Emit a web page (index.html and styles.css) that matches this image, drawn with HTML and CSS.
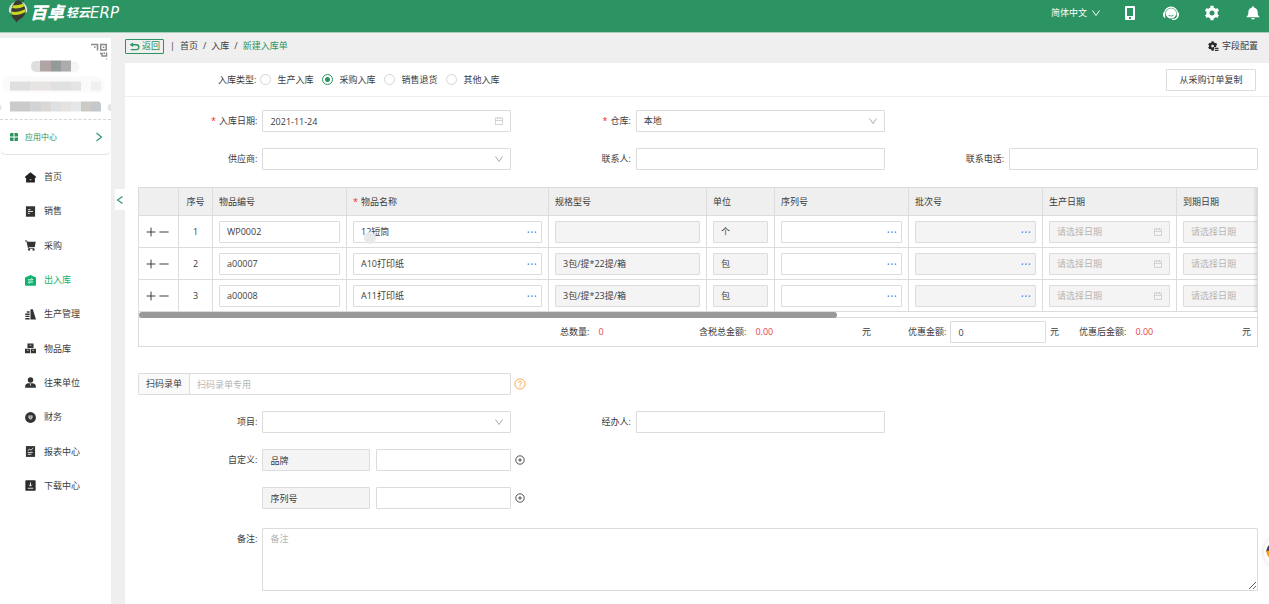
FILE: index.html
```html
<!DOCTYPE html>
<html lang="zh-CN">
<head>
<meta charset="utf-8">
<title>新建入库单</title>
<link rel="stylesheet" href="styles.css">
</head>
<body>
<svg class="defs" aria-hidden="true">
  <symbol id="i-cal" viewBox="0 0 10 10"><path d="M1.500 2h7v6.500h-7zM1.500 4.500h7M3.500 1v2M6.500 1v2" fill="none" stroke="currentColor" stroke-width=".8"/></symbol>
  <symbol id="i-down" viewBox="0 0 10 10"><path d="M1.500 2.500 5 7.500l3.500-5" fill="none" stroke="currentColor" stroke-width="1"/></symbol>
  <symbol id="i-plus" viewBox="0 0 10 10"><path d="M5 .6v8.800M.6 5h8.800" fill="none" stroke="currentColor" stroke-width="1"/></symbol>
  <symbol id="i-minus" viewBox="0 0 10 10"><path d="M.4 5h9.200" fill="none" stroke="currentColor" stroke-width="1"/></symbol>
  <symbol id="i-dots" viewBox="0 0 10 10"><path d="M.7 4.500h1.500v1.200H.7zM4.200 4.500h1.500v1.200H4.200zM7.700 4.500h1.500v1.200H7.700z" fill="currentColor"/></symbol>
  <symbol id="i-add" viewBox="0 0 10 10"><circle cx="5" cy="5" r="4.200" fill="none" stroke="currentColor" stroke-width=".9"/><path d="M5 3.200v3.600M3.200 5h3.600" stroke="currentColor" stroke-width=".9"/></symbol>
</svg>

<header class="topbar">
  <a class="logo" href="#">
    <svg class="bee" viewBox="0 0 20 23" aria-hidden="true">
      <path d="M9 1C4 2 0 7 1 12l3 2L10 5z" fill="#d8e0dc"/>
      <path d="M11 1c5 1 9 5 8 11l-2 1-7-8z" fill="#e9eeeb"/>
      <path d="M7 1.500C9-.3 13-.1 14.500 3 18 8 19 13 15 17c-2 2-5 2.500-6.500 5.500C7 19 3 18 3 13 3 8 5 4 7 1.500z" fill="#3a3a33"/>
      <path d="M5.500 5c3 .5 6 0 9.500-1.500l1.300 2.800C12 8.500 8 9 4 8z" fill="#c9d91f"/>
      <path d="M3.200 11.500c5 1 9 0 14-2.500l.1 3C13 14.500 8 15.500 3.300 14.500z" fill="#c9d91f"/>
      <path d="M10 0l3-.5M13 1l3-.2" stroke="#3a3a33"/>
    </svg>
    <span class="brand">百卓</span><span class="sub">轻云</span><span class="erp">ERP</span>
  </a>
  <nav class="tools" aria-label="工具">
    <button class="lang" type="button">简体中文 <svg class="ico10" aria-hidden="true"><use href="#i-down"/></svg></button>
    <button type="button" aria-label="手机"><svg viewBox="0 0 16 16"><path fill-rule="evenodd" d="M4 1h8q1 0 1 1v12q0 1-1 1H4q-1 0-1-1V2q0-1 1-1zm1 2v8h6V3zm2 9v2h2v-2z" fill="#fff"/></svg></button>
    <button type="button" aria-label="客服"><svg viewBox="0 0 16 16"><path d="M1.600 8.500a6.400 6.400 0 0 1 12.800 0" fill="none" stroke="#fff" stroke-width="1.200"/><path d="M.2 7.500h2V13H1.500Q0 12 0 10zM15.800 7.500h-2V13h.7Q16 12 16 10z" fill="#fff"/><circle cx="8" cy="8.400" r="5.200" fill="#fff"/><path d="M5.500 10.300q2.500 1.600 5 0" fill="none" stroke="#2c9362" stroke-width=".8"/><path d="M14.500 12q-1 2.500-5.500 2.500" fill="none" stroke="#fff" stroke-width="1.200"/></svg></button>
    <button type="button" aria-label="设置"><svg viewBox="0 0 16 16"><circle cx="8" cy="8" r="4.100" fill="none" stroke="#fff" stroke-width="3.200"/><path d="M8 .8v3M8 12.200v3M1.800 4.400l2.600 1.500M11.600 10.100l2.600 1.500M1.800 11.600l2.600-1.500M11.600 5.900l2.600-1.500" stroke="#fff" stroke-width="3.200"/></svg></button>
    <button type="button" aria-label="通知"><svg viewBox="0 0 16 16"><path d="M8 1.200q1 0 1 1.200c2.600.6 3.700 2.500 3.700 5 0 2.300.5 3 1.800 4.300v.6h-13v-.6C2.800 10.400 3.300 9.700 3.300 7.400c0-2.500 1.100-4.400 3.700-5q0-1.200 1-1.200zM6.200 13h3.600q-.3 1.600-1.800 1.600T6.200 13z" fill="#fff"/></svg></button>
  </nav>
</header>

<div class="shell">
  <aside class="side">
    <section class="card">
      <svg class="profile" viewBox="0 0 111 80" aria-hidden="true">
        <g fill="none" stroke="#8b8b8b" stroke-width="1.500"><path d="M91 6h6.500v6M100.700 6h5.500v5.500h-5.500zM100 15h2v2.500h4.500V14"/></g>
        <path d="M94 8h1.500v1.500H94zM102.800 8h1.500v1.500h-1.500zM103.500 14h1.500v1.500h-1.500zM106 20h1v1h-1z" fill="#8b8b8b"/>
        <rect x="31" y="23" width="48" height="11" rx="5" fill="#f5f5f6"/><path d="M36 22.500h4v11h-4q-5-1-5-6t5-5z" fill="#dedede"/>
        <path d="M40 22h11v11H40z" fill="#b0a4a5"/><path d="M51 22h10v11H51z" fill="#949999"/><path d="M61 22h10v11H61z" fill="#adabad"/>
        <rect x="2" y="38" width="103" height="16" rx="8" fill="#fafafa"/>
        <path d="M10 43h20v9H10z" fill="#dfdfdf"/><path d="M30 43h21v9H30z" fill="#e7e4e3"/><path d="M51 43h20v9H51z" fill="#dfe0e2"/><path d="M71 43h10v9H71z" fill="#e4e4e4"/><path d="M91 43h10v9H91z" fill="#f0f0f0"/>
        <circle cx="-2" cy="69" r="3.500" fill="#e4e4e4"/><circle cx="111" cy="69" r="3.500" fill="#e4e4e4"/>
        <path d="M10 63h20v10H10z" fill="#cbcaca"/><path d="M30 63h11v10H30z" fill="#d2d3d6"/><path d="M41 63h10v10H41z" fill="#d9d8d4"/><path d="M51 63h10v10H51z" fill="#dfe0e3"/><path d="M61 63h10v10H61z" fill="#e5e2df"/><path d="M71 63h10v10H71z" fill="#e5e8ea"/><path d="M81 63h10v10H81z" fill="#cdcac4"/><path d="M91 63h8l2 2v8H91z" fill="#c4c8ca"/>
      </svg>
      <a class="apps" href="#">
        <svg class="ico10" viewBox="0 0 10 10" aria-hidden="true"><path d="M2 1h2.500v3.500h-3.500V2q0-1 1-1zM5.500 1H8q1 0 1 1v2.500H5.500zM1 5.500h3.500V9H2q-1 0-1-1zM5.500 5.500H9V8q0 1-1 1H5.500z" fill="#2c9362"/></svg>
        <span>应用中心</span>
        <svg class="ico10" viewBox="0 0 10 10" aria-hidden="true"><path d="M2.500 1 7.500 5l-5 4" fill="none" stroke="#2c9362" stroke-width="1.100"/></svg>
      </a>
    </section>
    <nav class="menu" aria-label="主菜单">
      <a href="#"><svg viewBox="0 0 12 12"><path d="M6 .3 11.800 5v1.500h-1V11.500H1.200v-5h-1V5z" fill="#222"/><path d="M5 8.500h2" stroke="#ddd"/></svg>首页</a>
      <a href="#"><svg viewBox="0 0 12 12"><path d="M1 .3h10v11.400H1z" fill="#333"/><path d="M3.200 4h3M3.200 6h5.500M3.200 8h2" stroke="#fff" stroke-width=".9"/></svg>销售</a>
      <a href="#"><svg viewBox="0 0 12 12"><path d="M2 2h9.700l-1 5.500H3.600z" fill="#333"/><path d="M0 1h2l1.800 8H10" fill="none" stroke="#333"/><circle cx="4.500" cy="10.500" r="1.200" fill="#333"/><circle cx="9.300" cy="10.500" r="1.200" fill="#333"/></svg>采购</a>
      <a href="#" class="on" aria-current="page"><svg viewBox="0 0 12 12"><path d="M6 0l6 2.600V10.500q0 1.300-1.300 1.300H1.300Q0 11.800 0 10.500V2.600z" fill="#0fb46f"/><path d="M3.300 5.300h5M7 3.700l1.600 1.600M8.700 7.700h-5M5 9.300 3.400 7.700" fill="none" stroke="#fff" stroke-width="1"/></svg>出入库</a>
      <a href="#"><svg viewBox="0 0 12 12"><path d="M6 .3h2.500L12 11.500H6zM.3 5h4.700v1.500H.3zM.3 7.300H5v1.500H.3zM.3 9.700H5v1.800H.3zM2 2.500h3v1.700H2z" fill="#333"/></svg>生产管理</a>
      <a href="#"><svg viewBox="0 0 12 12"><path d="M2.700.6h6.600v4.800H2.700zM0 6.200h5.600v5H0zM6.400 6.200H12v5H6.400z" fill="#333"/><path d="M5 2.500h2M2 8h2M8 8h2" stroke="#fff" stroke-width=".7"/></svg>物品库</a>
      <a href="#"><svg viewBox="0 0 12 12"><circle cx="6" cy="3.200" r="3" fill="#333"/><path d="M.2 11.800V9.800Q.5 7.100 4 6.800h4q3.500.3 3.800 3v2z" fill="#333"/><path d="M6 7v2.500" stroke="#fff" stroke-width=".8"/></svg>往来单位</a>
      <a href="#"><svg viewBox="0 0 12 12"><circle cx="6" cy="6" r="5.900" fill="#333"/><path d="M3.800 3.800h4.400v2.500L6 8.800 3.800 6.300z" fill="#ddd"/><path d="M4.500 5.300h3M6 5v3" stroke="#555" stroke-width=".6"/></svg>财务</a>
      <a href="#"><svg viewBox="0 0 12 12"><path d="M1 .1h10v11.800H1z" fill="#333"/><path d="M3 5l2-1.500L6.500 4.500 9 2.200M3 7h5.500M3 9h4" fill="none" stroke="#fff" stroke-width=".9"/></svg>报表中心</a>
      <a href="#"><svg viewBox="0 0 12 12"><rect x=".4" y=".2" width="11.200" height="11.600" rx="1" fill="#2b2b2b"/><path d="M6 2.500v4M4.300 5 6 6.800 7.700 5M3 9h6" fill="none" stroke="#fff" stroke-width=".9"/></svg>下载中心</a>
    </nav>
  </aside>

  <div class="gutter"><button class="fold" type="button" aria-label="收起菜单"><svg class="ico10" viewBox="0 0 10 10"><path d="M7.500 1.500 2.500 5l5 3.500" fill="none" stroke="#2c9362" stroke-width="1.100"/></svg></button></div>

  <main class="main">
    <div class="crumbs">
      <button class="back" type="button"><svg viewBox="0 0 12 10" aria-hidden="true"><path d="M4.500.5v5L.5 3z" fill="#2c9362"/><path d="M3 3h5q2.800 0 2.800 2.800T8 8.500H2" fill="none" stroke="#2c9362" stroke-width="1.500"/></svg>返回</button>
      <span class="bar">|</span>
      <a href="#">首页</a><span>/</span><a href="#">入库</a><span>/</span><a href="#" class="here">新建入库单</a>
      <button class="config" type="button"><svg viewBox="0 0 12 12" aria-hidden="true"><circle cx="5" cy="5.500" r="2.800" fill="none" stroke="#2b2b2b" stroke-width="2.600"/><path d="M5 .3v2M5 8.700v2M.8 3l1.800 1M7.400 4l2-1M.8 8l1.800-1" stroke="#2b2b2b" stroke-width="2.400"/><path d="M6.700 6.700h5v5h-5z" fill="#efefef"/><path d="M7.500 8h4M7.500 10.200h4" stroke="#333" stroke-width="1.300"/></svg>字段配置</button>
    </div>

    <form class="form">
      <div class="type-row">
        <fieldset class="types">
          <legend>入库类型:</legend>
          <label><input type="radio" name="type">生产入库</label>
          <label><input type="radio" name="type" checked>采购入库</label>
          <label><input type="radio" name="type">销售退货</label>
          <label><input type="radio" name="type">其他入库</label>
        </fieldset>
        <button class="copy" type="button">从采购订单复制</button>
      </div>

      <div class="body">
        <div class="grid">
          <div class="item"><label class="req" for="date">入库日期:</label><div class="box"><input id="date" type="text" value="2021-11-24"><svg class="ico10"><use href="#i-cal"/></svg></div></div>
          <div class="item"><label class="req" for="store">仓库:</label><div class="box"><select id="store"><option>本地</option></select><svg class="ico10 arrow"><use href="#i-down"/></svg></div></div>
          <div class="item first"><label for="supplier">供应商:</label><div class="box"><select id="supplier"><option></option></select><svg class="ico10 arrow"><use href="#i-down"/></svg></div></div>
          <div class="item"><label for="contact">联系人:</label><div class="box"><input id="contact" type="text"></div></div>
          <div class="item"><label for="phone">联系电话:</label><div class="box"><input id="phone" type="text"></div></div>
        </div>

        <section class="goods">
          <div class="scroller">
            <table>
              <colgroup><col class="w-op"><col class="w-no"><col class="w-m"><col class="w-name"><col class="w-spec"><col class="w-unit"><col class="w-m"><col class="w-m"><col class="w-m"><col class="w-m"></colgroup>
              <thead><tr><th></th><th class="mid">序号</th><th>物品编号</th><th><span class="req">物品名称</span></th><th>规格型号</th><th>单位</th><th>序列号</th><th>批次号</th><th>生产日期</th><th>到期日期</th></tr></thead>
              <tbody>
                <tr>
                  <td class="ops"><button type="button" aria-label="添加行"><svg class="ico10"><use href="#i-plus"/></svg></button><button type="button" aria-label="删除行"><svg class="ico10"><use href="#i-minus"/></svg></button></td>
                  <td class="mid">1</td>
                  <td><div class="box"><input type="text" aria-label="物品编号" value="WP0002"></div></td>
                  <td><div class="box"><input type="text" aria-label="物品名称" value="12短筒"><span class="smudge"></span><svg class="ico10 more"><use href="#i-dots"/></svg></div></td>
                  <td><div class="box off"><input type="text" aria-label="规格型号" disabled></div></td>
                  <td><div class="box off"><input type="text" aria-label="单位" value="个" disabled></div></td>
                  <td><div class="box"><input type="text" aria-label="序列号"><svg class="ico10 more"><use href="#i-dots"/></svg></div></td>
                  <td><div class="box off"><input type="text" aria-label="批次号" disabled><svg class="ico10 more"><use href="#i-dots"/></svg></div></td>
                  <td><div class="box off"><input type="text" aria-label="生产日期" placeholder="请选择日期" disabled><svg class="ico10"><use href="#i-cal"/></svg></div></td>
                  <td><div class="box off"><input type="text" aria-label="到期日期" placeholder="请选择日期" disabled><svg class="ico10"><use href="#i-cal"/></svg></div></td>
                </tr>
                <tr>
                  <td class="ops"><button type="button" aria-label="添加行"><svg class="ico10"><use href="#i-plus"/></svg></button><button type="button" aria-label="删除行"><svg class="ico10"><use href="#i-minus"/></svg></button></td>
                  <td class="mid">2</td>
                  <td><div class="box"><input type="text" aria-label="物品编号" value="a00007"></div></td>
                  <td><div class="box"><input type="text" aria-label="物品名称" value="A10打印纸"><svg class="ico10 more"><use href="#i-dots"/></svg></div></td>
                  <td><div class="box off"><input type="text" aria-label="规格型号" value="3包/提*22提/箱" disabled></div></td>
                  <td><div class="box off"><input type="text" aria-label="单位" value="包" disabled></div></td>
                  <td><div class="box"><input type="text" aria-label="序列号"><svg class="ico10 more"><use href="#i-dots"/></svg></div></td>
                  <td><div class="box off"><input type="text" aria-label="批次号" disabled><svg class="ico10 more"><use href="#i-dots"/></svg></div></td>
                  <td><div class="box off"><input type="text" aria-label="生产日期" placeholder="请选择日期" disabled><svg class="ico10"><use href="#i-cal"/></svg></div></td>
                  <td><div class="box off"><input type="text" aria-label="到期日期" placeholder="请选择日期" disabled><svg class="ico10"><use href="#i-cal"/></svg></div></td>
                </tr>
                <tr>
                  <td class="ops"><button type="button" aria-label="添加行"><svg class="ico10"><use href="#i-plus"/></svg></button><button type="button" aria-label="删除行"><svg class="ico10"><use href="#i-minus"/></svg></button></td>
                  <td class="mid">3</td>
                  <td><div class="box"><input type="text" aria-label="物品编号" value="a00008"></div></td>
                  <td><div class="box"><input type="text" aria-label="物品名称" value="A11打印纸"><svg class="ico10 more"><use href="#i-dots"/></svg></div></td>
                  <td><div class="box off"><input type="text" aria-label="规格型号" value="3包/提*23提/箱" disabled></div></td>
                  <td><div class="box off"><input type="text" aria-label="单位" value="包" disabled></div></td>
                  <td><div class="box"><input type="text" aria-label="序列号"><svg class="ico10 more"><use href="#i-dots"/></svg></div></td>
                  <td><div class="box off"><input type="text" aria-label="批次号" disabled><svg class="ico10 more"><use href="#i-dots"/></svg></div></td>
                  <td><div class="box off"><input type="text" aria-label="生产日期" placeholder="请选择日期" disabled><svg class="ico10"><use href="#i-cal"/></svg></div></td>
                  <td><div class="box off"><input type="text" aria-label="到期日期" placeholder="请选择日期" disabled><svg class="ico10"><use href="#i-cal"/></svg></div></td>
                </tr>
              </tbody>
            </table>
          </div>
          <div class="track"><div class="thumb"></div></div>
          <div class="totals">
            <div class="sum qty"><span>总数量:</span><b>0</b></div>
            <div class="sum tax"><span>含税总金额:</span><b>0.00</b><span>元</span></div>
            <div class="sum cut"><label for="cut">优惠金额:</label><div class="box"><input id="cut" type="text" value="0"></div><span>元</span></div>
            <div class="sum net"><span>优惠后金额:</span><b>0.00</b><span>元</span></div>
          </div>
        </section>

        <div class="grid lower">
          <div class="scan first"><label for="scan">扫码录单</label><input id="scan" type="text" placeholder="扫码录单专用"><button class="tail help" type="button" aria-label="帮助"><svg viewBox="0 0 12 12"><circle cx="6" cy="6" r="5.100" fill="none" stroke="#f9a94f"/><path d="M4.300 4.800Q4.300 3.300 6 3.300t1.700 1.300Q7.700 5.600 6 6.200V7.200M6 8v1" fill="none" stroke="#f9a94f" stroke-width=".9"/></svg></button></div>
          <div class="item first"><label for="project">项目:</label><div class="box"><select id="project"><option></option></select><svg class="ico10 arrow"><use href="#i-down"/></svg></div></div>
          <div class="item"><label for="agent">经办人:</label><div class="box"><input id="agent" type="text"></div></div>
          <div class="item first"><label for="c1">自定义:</label><div class="pair"><div class="box off"><input id="c1" type="text" value="品牌" disabled></div><div class="box"><input type="text" aria-label="品牌"></div><button class="tail" type="button" aria-label="添加自定义"><svg class="ico10"><use href="#i-add"/></svg></button></div></div>
          <div class="item first"><span></span><div class="pair"><div class="box off"><input type="text" aria-label="自定义名称" value="序列号" disabled></div><div class="box"><input type="text" aria-label="序列号"></div><button class="tail" type="button" aria-label="添加自定义"><svg class="ico10"><use href="#i-add"/></svg></button></div></div>
        </div>
        <div class="remark"><label for="remark">备注:</label><textarea id="remark" placeholder="备注"></textarea></div>
      </div>
    </form>
  </main>
</div>
<button class="float" type="button" aria-label="在线客服"><svg viewBox="0 0 28 24"><path d="M0 12Q1 6 5 3l20-3v14z" fill="#3d4257"/><path d="M0 11l9-1 4 13Q1 20 0 11z" fill="#fa9d1c"/></svg></button>
</body>
</html>
```

FILE: styles.css
```css
* { box-sizing: border-box; }

body {
  margin: 0;
  min-height: 100vh;
  display: flex;
  flex-direction: column;
  overflow: hidden;
  background: #efefef;
  color: #3c3c3c;
  font: 9px/14px "Open Sans", "Noto Sans CJK SC", sans-serif;
}

a { color: inherit; text-decoration: none; }
button, input, select, textarea { font: inherit; color: inherit; margin: 0; }
button { padding: 0; border: 0; background: none; cursor: pointer; }
svg { display: block; flex: none; }
.defs { position: absolute; width: 0; height: 0; }
.ico10 { width: 10px; height: 10px; }

.topbar {
  display: flex;
  justify-content: space-between;
  height: 33px;
  padding: 0 8px;
  background: #2c9362;
  border-bottom: 1px solid #a9cfbb;
  color: #fff;
}
.logo { display: flex; align-items: center; height: 25px; font-style: italic; font-weight: 700; }
.bee { width: 20px; height: 23px; align-self: flex-start; margin-right: 2px; }
.brand { font-size: 17px; font-weight: 900; line-height: 24px; }
.sub { font-size: 12px; margin-left: 2px; }
.erp { font-size: 15px; font-weight: 400; font-family: "DejaVu Sans", sans-serif; }
.tools { display: flex; align-items: center; gap: 25px; height: 26px; }
.tools svg { width: 16px; height: 16px; }
.lang { display: flex; align-items: center; gap: 4px; margin-right: -4px; }
.tools .ico10 { width: 10px; height: 10px; }

.shell { flex: 1; display: flex; min-height: 0; }

.side { width: 111px; margin-top: 5px; background: #fff; display: flex; flex-direction: column; }
.card { border-bottom: 1px solid #e2e2e2; border-radius: 0 0 6px 6px; }
.profile { width: 111px; height: 81px; overflow: hidden; }
.apps {
  display: flex;
  align-items: center;
  height: 35px;
  padding: 0 7px 0 9px;
  gap: 6px;
  border-top: 1px dashed #d5d5d5;
  color: #2c9362;
}
.apps span { flex: 1; font-size: 8px; }
.menu { flex: 1; display: flex; flex-direction: column; padding: 5px 0 101px; }
.menu a { flex: 1; display: flex; align-items: center; gap: 8px; padding-left: 25px; }
.menu svg { width: 11px; height: 11px; }
.menu .on { color: #0fb46f; }

.gutter { width: 14px; padding: 156px 0 0 4px; }
.fold { display: flex; align-items: center; width: 10px; height: 21px; background: #fff; }

.main { flex: 1; min-width: 0; display: flex; flex-direction: column; }
.crumbs { display: flex; align-items: center; gap: 5px; height: 30px; padding: 0 11px 4px 0; }
.back {
  display: flex;
  align-items: center;
  gap: 2px;
  height: 15px;
  padding: 0 3px;
  border: 1px solid #2c9362;
  border-radius: 1px;
  color: #2c9362;
}
.back svg { width: 11px; height: 9px; }
.bar { margin-left: 1px; }
.here { color: #2c9362; }
.config { display: flex; align-items: center; gap: 3px; margin-left: auto; }
.config svg { width: 11px; height: 11px; }

.form { flex: 1; background: #fff; }
.type-row {
  display: flex;
  align-items: center;
  justify-content: space-between;
  height: 34px;
  padding: 0 13px 0 93px;
  border-bottom: 1px solid #eee;
}
.types { display: flex; align-items: center; margin: 0; padding: 0; border: 0; gap: 9px; }
.types legend { float: left; padding: 0; margin-right: -5px; }
.types label { display: flex; align-items: center; gap: 6px; }
.types input {
  appearance: none;
  width: 11px;
  height: 11px;
  border: 1px solid #d5d5d5;
  border-radius: 50%;
  background: #fff;
}
.types input:checked { border-color: #2c9362; background: radial-gradient(circle, #2c9362 0 2px, #fff 3px); }
.copy { height: 22px; width: 90px; border: 1px solid #dcdcdc; border-radius: 1px; background: #fff; }

.body { padding: 13px 11px 13px 13px; }
.grid { display: grid; grid-template-columns: repeat(3, 1fr); row-gap: 16px; }
.first { grid-column: 1; }
.item { display: grid; grid-template-columns: 1fr 2fr; align-items: center; }
.item > label, .remark > label { text-align: right; padding-right: 5px; }
.req::before { content: "*"; color: #f5222d; margin-right: 3px; }

.box {
  position: relative;
  display: flex;
  align-items: center;
  width: 100%;
  min-width: 0;
  height: 22px;
  padding: 0 6px 0 7px;
  border: 1px solid #dcdcdc;
  border-radius: 1px;
  background: #fff;
}
.box input, .box select {
  flex: 1;
  min-width: 0;
  width: 100%;
  height: 20px;
  padding: 0;
  border: 0;
  outline: 0;
  background: none;
  appearance: none;
}
.box > svg { color: #c8c8c8; }
.box .arrow { color: #aaa; }
.off { background: #f4f4f4; }
::placeholder { color: #b5b5b5; opacity: 1; }

.goods { margin-top: 17px; border: 1px solid #dcdcdc; }
.scroller { position: relative; overflow: hidden; }
.scroller::after {
  content: "";
  position: absolute;
  inset: 0 0 0 auto;
  width: 4px;
  background: linear-gradient(to right, transparent, rgba(0, 0, 0, .1));
}
table { width: 1172px; table-layout: fixed; border-collapse: separate; border-spacing: 0; }
.w-op { width: 40px; }
.w-no { width: 34px; }
.w-m { width: 134px; }
.w-name { width: 202px; }
.w-spec { width: 158px; }
.w-unit { width: 68px; }
th, td { padding: 0 6px; border-right: 1px solid #dcdcdc; border-bottom: 1px solid #dcdcdc; text-align: left; font-weight: 400; }
th { height: 28px; background: #efefef; }
td { height: 32px; }
.mid { text-align: center; }
.ops button { display: inline-block; margin-right: 3px; vertical-align: middle; }
.ops { white-space: nowrap; font-size: 0; padding-left: 7px; padding-right: 0; }
.box > .more { color: #2f7fe8; margin-right: -2px; }
.smudge { position: absolute; left: 10px; bottom: -2px; width: 12px; height: 12px; border-radius: 50%; background: #e9e9e9; }

.track { height: 6px; border-bottom: 1px solid #dcdcdc; }
.thumb { width: 62.4%; height: 6px; border-radius: 3px; background: #999; }
.totals { display: flex; justify-content: flex-end; height: 28px; padding-right: 6px; }
.sum { display: flex; align-items: center; }
.sum b { flex: 1; padding-left: 9px; color: #e64545; font-weight: 400; }
.qty { width: 139px; }
.tax { width: 172px; margin-right: 37px; }
.cut { width: 151px; margin-right: 20px; gap: 4px; }
.cut label { flex: none; }
.cut .box { flex: 1; }
.net { width: 172px; }

.lower { margin-top: 26px; }
.tail { position: absolute; left: 100%; margin-left: 4px; }
.scan { position: relative; display: flex; align-items: center; height: 22px; border: 1px solid #dcdcdc; border-radius: 1px; }
.scan label { display: flex; align-items: center; height: 20px; padding: 0 7px; background: #fafafa; border-right: 1px solid #dcdcdc; }
.scan input { flex: 1; min-width: 0; height: 20px; padding: 0 7px; border: 0; outline: 0; background: none; }
.help svg { width: 12px; height: 12px; }
.pair { position: relative; display: grid; grid-template-columns: 108px 1fr; gap: 6px; align-items: center; }
.remark { display: grid; grid-template-columns: 1fr 8fr; margin-top: 19px; }
.remark label { padding-top: 4px; }
.remark textarea { display: block; width: 100%; height: 63px; padding: 3px 7px; border: 1px solid #dcdcdc; border-radius: 1px; outline: 0; resize: vertical; }

.float {
  position: fixed;
  right: -27px;
  top: 536px;
  display: grid;
  place-items: center;
  width: 32px;
  height: 32px;
  border-radius: 50%;
  background: #fff;
  box-shadow: 0 0 5px rgba(0, 0, 0, .15);
}
.float svg { width: 28px; height: 24px; }
```
